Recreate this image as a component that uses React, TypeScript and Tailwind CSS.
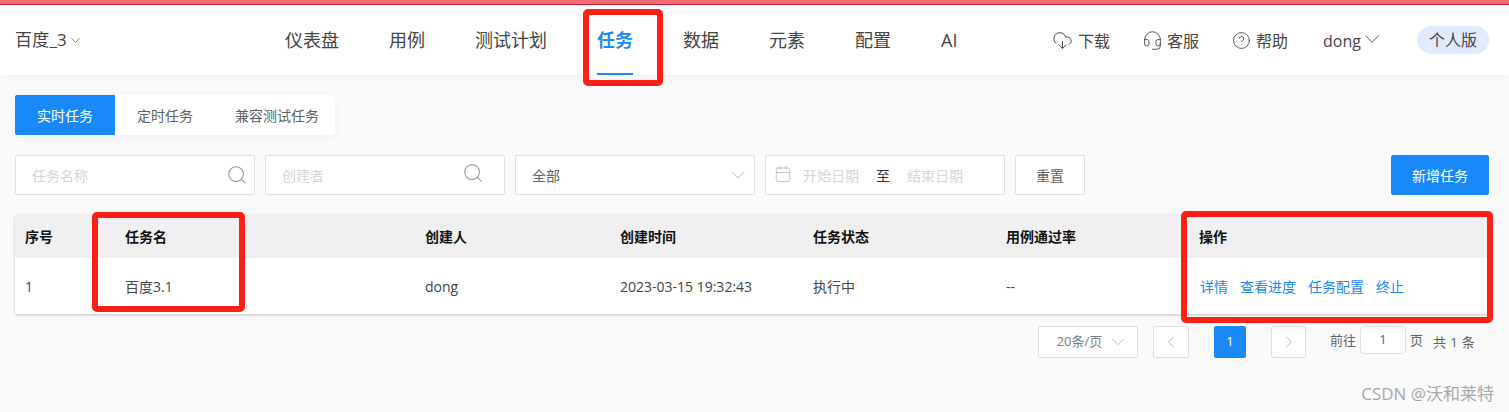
import { Calendar, ChevronDown, ChevronLeft, ChevronRight, CircleHelp, CloudDownload, Headset, Search } from "lucide-react";

const font = { fontFamily: '"Open Sans", "Noto Sans CJK SC", sans-serif' };

const navItems = ["仪表盘", "用例", "测试计划", "任务", "数据", "元素", "配置", "AI"];

const columns = "grid grid-cols-[100px_300px_195px_193px_193px_193px_300px]";

function Header() {
  return (
    <header className="flex h-[70px] items-center bg-white pl-[15px] pr-5 shadow-[0_2px_8px_rgba(0,0,0,0.03)]">
      <div className="flex w-[270px] items-center text-[17px] tracking-[0.2px] text-[#444]">
        百度_3
        <ChevronDown size={15} strokeWidth={1.1} className="ml-[1px]" />
      </div>
      <nav className="flex h-full w-[766px] items-center gap-[50px] text-[18px] text-[#444]">
        {navItems.map((item) =>
          item === "任务" ? (
            <a key={item} className="relative flex h-full items-center pt-px font-bold text-[#1989fa]">
              {item}
              <span className="absolute bottom-0 left-0 h-[2px] w-full bg-[#1989fa]" />
            </a>
          ) : (
            <a key={item} className="pt-px">
              {item}
            </a>
          ),
        )}
      </nav>
      <div className="flex items-center text-[16px] text-[#444]">
        <CloudDownload size={21} strokeWidth={1.1} className="ml-[1px] mr-[5px]" />
        <span className="pt-px">下载</span>
        <Headset size={21} strokeWidth={1} className="ml-[32px] mr-[4px]" />
        <span className="pt-px">客服</span>
        <CircleHelp size={19} strokeWidth={1.1} className="ml-[33px] mr-[5px]" />
        <span className="pt-px">帮助</span>
        <span className="ml-[35px] pt-px">dong</span>
        <ChevronDown size={26} strokeWidth={0.8} className="-ml-[2px] -mt-[2px]" />
        <span className="ml-[32px] flex h-7 w-[72px] items-center justify-center rounded-full bg-[#e1ebfc]">个人版</span>
      </div>
    </header>
  );
}

function Tabs() {
  return (
    <div className="ml-[15px] mt-5 flex h-10 w-[320px] items-center rounded-[2px] bg-white text-[14px] text-[#606266] shadow-[0_2px_12px_rgba(0,0,0,0.04)]">
      <span className="flex h-full w-[100px] items-center justify-center rounded-l-[2px] bg-[#1989fa] text-white">实时任务</span>
      <span className="ml-[22px]">定时任务</span>
      <span className="ml-[42px]">兼容测试任务</span>
    </div>
  );
}

function Filters() {
  const box = "flex h-10 items-center rounded-[2px] border border-[#dcdfe6] bg-white text-[14px]";
  return (
    <div className="mx-5 ml-[15px] mt-5 flex items-center gap-[10px]">
      <div className={`${box} w-[240px] justify-between pl-4 pr-[6px] text-[#d4d6dc]`}>
        任务名称
        <Search size={22} strokeWidth={1.1} className="text-[#8c9099]" />
      </div>
      <div className={`${box} w-[240px] justify-between pl-4 pr-[20px] text-[#d4d6dc]`}>
        创建者
        <Search size={22} strokeWidth={1.1} className="-mt-1 text-[#8c9099]" />
      </div>
      <div className={`${box} w-[240px] justify-between pl-4 pr-[4px] text-[#606266]`}>
        全部
        <ChevronDown size={24} strokeWidth={0.9} className="text-[#b4b8c0]" />
      </div>
      <div className={`${box} w-[240px] pl-[8px] text-[#d4d6dc]`}>
        <Calendar size={18} strokeWidth={1.1} className="-mt-[3px] text-[#b4b8c0]" />
        <span className="ml-[11px]">开始日期</span>
        <span className="ml-[17px] text-[#333]">至</span>
        <span className="ml-[17px]">结束日期</span>
      </div>
      <button className={`${box} w-[70px] justify-center text-[#606266]`}>重置</button>
      <button className="ml-[296px] flex h-10 w-[98px] items-center justify-center rounded-[2px] bg-[#1989fa] text-[14px] text-white">
        新增任务
      </button>
    </div>
  );
}

function TaskTable() {
  const head = ["序号", "任务名", "创建人", "创建时间", "任务状态", "用例通过率", "操作"];
  const cells = ["1", "百度3.1", "dong", "2023-03-15 19:32:43", "执行中", "--"];
  return (
    <div className="ml-[15px] mt-5 w-[1474px] bg-white text-[14px] shadow-[0_1px_3px_rgba(0,0,0,0.22)]">
      <div className={`${columns} h-[43px] items-center bg-[#f0f0f0] font-bold text-[#111]`}>
        {head.map((title) => (
          <div key={title} className="pl-[10px]">
            {title}
          </div>
        ))}
      </div>
      <div className={`${columns} h-[56px] items-center text-[#444]`}>
        {cells.map((cell) => (
          <div key={cell} className="pl-[10px]">
            {cell}
          </div>
        ))}
        <div className="flex gap-3 pl-[11px] text-[#1989fa]">
          <a>详情</a>
          <a>查看进度</a>
          <a>任务配置</a>
          <a>终止</a>
        </div>
      </div>
    </div>
  );
}

function Pagination() {
  const box = "flex h-8 items-center justify-center rounded-[2px] border border-[#dcdfe6] bg-white";
  return (
    <div className="ml-[1038px] mt-3 flex items-start text-[13px] text-[#606266]">
      <div className={`${box} w-[100px] gap-[5px] pl-[10px] text-[#7a7d85]`}>
        20条/页
        <ChevronDown size={22} strokeWidth={0.9} className="text-[#b4b8c0]" />
      </div>
      <div className={`${box} ml-[15px] w-9 text-[#b4b8c0]`}>
        <ChevronLeft size={20} strokeWidth={1.2} />
      </div>
      <div className="ml-[25px] flex h-8 w-8 items-center justify-center rounded-[2px] bg-[#1989fa] text-white">1</div>
      <div className={`${box} ml-[25px] w-[35px] text-[#b4b8c0]`}>
        <ChevronRight size={20} strokeWidth={1.2} />
      </div>
      <span className="ml-6 mt-[5px]">前往</span>
      <div className="ml-1 flex h-7 w-[46px] items-center justify-center rounded border border-[#dcdfe6] bg-white">1</div>
      <span className="ml-1 mt-[5px]">页</span>
      <span className="ml-[10px] mt-[7px] tracking-[0.4px]">共 1 条</span>
    </div>
  );
}

export default function App() {
  return (
    <div style={font} className="relative h-[412px] w-[1509px] overflow-hidden bg-[#fafafa]">
      <div className="h-[5px] border-b border-[#c8242f] bg-[#f36c7c]" />
      <Header />
      <Tabs />
      <Filters />
      <TaskTable />
      <Pagination />

      {/* 标注框 */}
      <div className="absolute left-[583px] top-[9px] h-[77px] w-[80px] rounded-[5px] border-[6px] border-[#ff2015]" />
      <div className="absolute left-[92px] top-[212px] h-[100px] w-[153px] rounded-[5px] border-[6px] border-[#ff2015]" />
      <div className="absolute left-[1181px] top-[211px] h-[112px] w-[312px] rounded-[5px] border-[6px] border-[#ff2015]" />

      <div className="absolute right-[15px] top-[381px] text-[17px] text-[#a8a8a8]">CSDN @沃和莱特</div>
    </div>
  );
}
